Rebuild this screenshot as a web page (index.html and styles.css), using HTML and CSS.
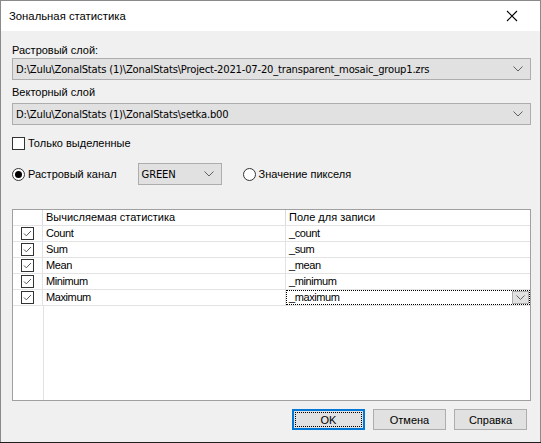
FILE: index.html
```html
<!DOCTYPE html>
<html>
<head>
<meta charset="utf-8">
<link rel="stylesheet" href="styles.css">
</head>
<body>
<div class="window">
  <div class="titlebar">
    <span class="title">Зональная статистика</span>
    <svg class="close" width="12" height="12" viewBox="0 0 12 12"><path d="M1 1L11 11M11 1L1 11" stroke="#000" stroke-width="1.1" fill="none"/></svg>
  </div>
  <div class="content">
    <div class="label l1">Растровый слой:</div>
    <div class="combo c1"><span class="ctext">D:\Zulu\ZonalStats (1)\ZonalStats\Project-2021-07-20_transparent_mosaic_group1.zrs</span><svg class="chev" width="10" height="6" viewBox="0 0 10 6"><path d="M0.5 0.5L5 5L9.5 0.5" stroke="#606060" fill="none"/></svg></div>
    <div class="label l2">Векторный слой</div>
    <div class="combo c2"><span class="ctext">D:\Zulu\ZonalStats (1)\ZonalStats\setka.b00</span><svg class="chev" width="10" height="6" viewBox="0 0 10 6"><path d="M0.5 0.5L5 5L9.5 0.5" stroke="#606060" fill="none"/></svg></div>
    <div class="checkrow"><span class="cbox"></span><span class="label">Только выделенные</span></div>
    <div class="radiorow">
      <span class="radio on"><span class="dot"></span></span><span class="label rl">Растровый канал</span>
      <div class="combo small"><span class="ctext">GREEN</span><svg class="chev" width="10" height="6" viewBox="0 0 10 6"><path d="M0.5 0.5L5 5L9.5 0.5" stroke="#606060" fill="none"/></svg></div>
      <span class="radio"></span><span class="label rl">Значение пикселя</span>
    </div>
    <div class="grid">
      <div class="row head">
        <div class="cell c0"></div>
        <div class="cell c1h">Вычисляемая статистика</div>
        <div class="cell c2h">Поле для записи</div>
      </div>
      <div class="row"><div class="cell c0"><span class="gcheck"><svg width="11" height="11" viewBox="0 0 11 11"><path d="M2 5.5L4.3 7.8L9 3" stroke="#555" fill="none"/></svg></span></div><div class="cell c1h">Count</div><div class="cell c2h">_count</div></div>
      <div class="row"><div class="cell c0"><span class="gcheck"><svg width="11" height="11" viewBox="0 0 11 11"><path d="M2 5.5L4.3 7.8L9 3" stroke="#555" fill="none"/></svg></span></div><div class="cell c1h">Sum</div><div class="cell c2h">_sum</div></div>
      <div class="row"><div class="cell c0"><span class="gcheck"><svg width="11" height="11" viewBox="0 0 11 11"><path d="M2 5.5L4.3 7.8L9 3" stroke="#555" fill="none"/></svg></span></div><div class="cell c1h">Mean</div><div class="cell c2h">_mean</div></div>
      <div class="row"><div class="cell c0"><span class="gcheck"><svg width="11" height="11" viewBox="0 0 11 11"><path d="M2 5.5L4.3 7.8L9 3" stroke="#555" fill="none"/></svg></span></div><div class="cell c1h">Minimum</div><div class="cell c2h">_minimum</div></div>
      <div class="row"><div class="cell c0"><span class="gcheck"><svg width="11" height="11" viewBox="0 0 11 11"><path d="M2 5.5L4.3 7.8L9 3" stroke="#555" fill="none"/></svg></span></div><div class="cell c1h">Maximum</div><div class="cell c2h focus"><span>_maximum</span><span class="dd"><svg width="9" height="5" viewBox="0 0 9 5"><path d="M0.5 0.5L4.5 4.5L8.5 0.5" stroke="#606060" fill="none"/></svg></span></div></div>
      <div class="rest"><div class="c0"></div></div>
    </div>
    <div class="buttons">
      <button class="btn ok">OK</button>
      <button class="btn">Отмена</button>
      <button class="btn">Справка</button>
    </div>
  </div>
</div>
</body>
</html>
```
FILE: styles.css
```css
html, body { margin: 0; padding: 0; background: #1f1f1f; }
body { width: 541px; height: 443px; overflow: hidden; }
.window {
  width: 539px; height: 441px;
  border: 1px solid #8a8a8a; border-bottom: none;
  background: #f0f0f0;
  display: flex; flex-direction: column;
  font-family: "Liberation Sans", Arial, sans-serif;
  font-size: 11px; color: #000;
}
.titlebar {
  height: 30px; background: #fff;
  display: flex; align-items: center; justify-content: space-between;
  padding: 0 22px 0 8px;
}
.title { font-family: "Liberation Sans", sans-serif; font-size: 11.3px; }
.close { display: block; }
.content { padding: 11px 9px 0 11px; display: flex; flex-direction: column; flex: 1; }
.label { font-family: "Liberation Sans", sans-serif; font-size: 11px; line-height: 16px; }
.l1 { height: 16px; }
.l2 { margin-top: 4px; height: 16px; }
.combo {
  box-sizing: border-box; height: 22px; border: 1px solid #adadad; background: #e1e1e1;
  display: flex; align-items: center; justify-content: space-between; padding: 0 7px 0 3px;
}
.c2 { margin-top: 3px; }
.ctext { font-family: "DejaVu Sans", sans-serif; font-size: 10px; letter-spacing: -0.2px; }
.chev { display: block; }
.checkrow { display: flex; align-items: center; margin-top: 11px; height: 14px; }
.cbox { box-sizing: border-box; width: 13px; height: 13px; border: 1px solid #333; background: #fff; margin-right: 3px; }
.radiorow { display: flex; align-items: center; margin-top: 13px; height: 22px; }
.radio { box-sizing: border-box; width: 13px; height: 13px; border-radius: 50%; border: 1px solid #333; background: #fff; margin-right: 3px; display: flex; align-items: center; justify-content: center; }
.radio .dot { width: 7px; height: 7px; border-radius: 50%; background: #000; }
.small { width: 84px; margin-left: 21px; margin-right: 21px; }
.grid {
  margin-top: 24px; box-sizing: border-box; width: 519px; height: 192px;
  border: 1px solid #a0a0a0; background: #fff; display: flex; flex-direction: column;
}
.row { display: flex; height: 15px; border-bottom: 1px solid #e3e3e3; }
.cell { box-sizing: border-box; height: 15px; line-height: 15px; padding-left: 3px; white-space: nowrap; overflow: hidden; font-size: 11px; letter-spacing: -0.4px; }
.c0 { width: 30px; flex: none; border-right: 1px solid #e3e3e3; padding: 0; display: flex; align-items: center; justify-content: center; }
.c1h { width: 243px; flex: none; border-right: 1px solid #e3e3e3; }
.c2h { flex: 1; }
.head .c0, .head .c1h { border-right-color: #dadada; }
.head .cell { font-family: "Liberation Sans", sans-serif; font-size: 11px; letter-spacing: 0; }
.gcheck { box-sizing: border-box; width: 13px; height: 13px; border: 1px solid #333; display: flex; align-items: center; justify-content: center; }
.gcheck svg { display: block; }
.focus { outline: 1px dotted #000; outline-offset: -1px; display: flex; justify-content: space-between; align-items: center; padding-right: 1px; }
.dd { box-sizing: border-box; width: 17px; height: 13px; border: 1px solid #adadad; background: #e1e1e1; display: flex; align-items: center; justify-content: center; }
.dd svg { display: block; }
.rest { flex: 1; display: flex; }
.rest .c0 { height: 100%; }
.buttons { display: flex; justify-content: flex-end; gap: 8px; margin-top: 8px; padding-right: 4px; }
.btn {
  box-sizing: border-box; width: 73px; height: 21px; margin: 0; padding: 0;
  border: 1px solid #adadad; background: #e1e1e1;
  font-family: "Liberation Sans", sans-serif; font-size: 11px; color: #000;
}
.btn.ok { border: 2px solid #0078d7; outline: 1px dotted #000; outline-offset: -4px; }
```
